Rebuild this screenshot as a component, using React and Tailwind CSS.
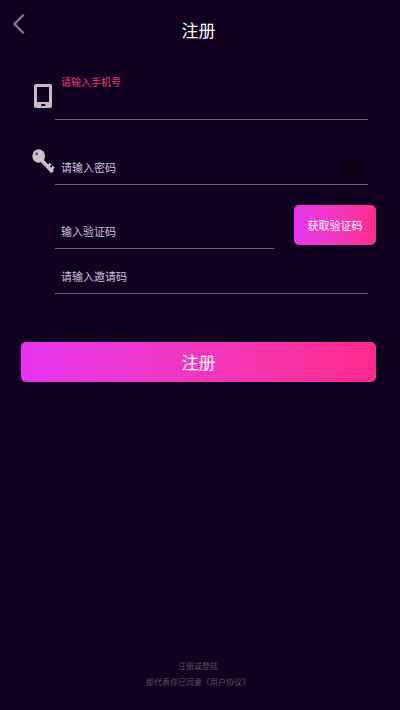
import { useState } from 'react';

const inputClass = 'block h-9 w-full min-w-0 border-b border-[#6f6578] bg-transparent px-[6px] text-[11px] text-[#d6cde4] placeholder:text-[#cbc2dc] placeholder:opacity-100 outline-none';

const PhoneIcon = () => (
  <svg className="h-[26px] w-[22px]" viewBox="0 0 22 26" fill="none" aria-hidden="true">
    <rect x="2" y="1" width="18" height="24" rx="2" fill="#c3bcc8" />
    <rect x="5" y="4" width="12" height="15" fill="#11001f" />
    <rect x="9" y="21" width="4.5" height="2" rx="1" fill="#11001f" />
  </svg>
);

const KeyIcon = () => (
  <svg className="h-[26px] w-[23px]" viewBox="0 0 23 26" fill="none" aria-hidden="true">
    <ellipse cx="6.7" cy="7" rx="6.4" ry="6.8" fill="#c9c3ce" />
    <circle cx="4.6" cy="4.8" r="1.4" fill="#4a4052" />
    <path d="M9 10.5L20.6 23" stroke="#c9c3ce" strokeWidth="3.6" />
    <path d="M15.5 18.5L18.6 14.6M18.4 22L21.6 17.6" stroke="#c9c3ce" strokeWidth="2.8" />
  </svg>
);

const EyeOffIcon = () => (
  <svg className="h-5 w-5" viewBox="0 0 20 20" fill="none" stroke="#07000f" strokeWidth="2" aria-hidden="true">
    <path d="M1.5 10C4 5.5 6.8 3.5 10 3.5S16 5.5 18.5 10C16 14.5 13.2 16.5 10 16.5S4 14.5 1.5 10Z" />
    <circle cx="10" cy="10" r="3" />
    <path d="M3 2L17 18" />
  </svg>
);

const App = () => {
  const [showPassword, setShowPassword] = useState(false);
  const [formData, setFormData] = useState({
    phone: '',
    password: '',
    code: '',
    invite: ''
  });

  const onChange = (e) => setFormData({ ...formData, [e.target.name]: e.target.value });

  const onSubmit = (e) => {
    e.preventDefault();
  };

  return (
    <div className="flex min-h-screen flex-col bg-[#11001f] font-['Noto_Sans_CJK_SC',sans-serif]">
      <header className="grid h-[60px] grid-cols-[1fr_auto_1fr] items-center pr-[3px]">
        <button type="button" aria-label="返回" className="mb-3 ml-3 w-4">
          <svg className="h-[22px] w-[14px]" viewBox="0 0 14 22" fill="none" stroke="#837b89" strokeWidth="2.2" aria-hidden="true">
            <path d="M11.8 1.5L2.5 11L11.8 20.5" />
          </svg>
        </button>
        <h1 className="text-[17px] leading-6 text-white">注册</h1>
      </header>

      <form onSubmit={onSubmit}>
        {/* Phone */}
        <div className="flex pt-[14px] pr-8 pl-8">
          <div className="w-[23px] shrink-0 pt-[9px]">
            <PhoneIcon />
          </div>
          <div className="min-w-0 flex-1">
            <label htmlFor="phone" className="block px-[6px] text-[10px] leading-4 text-[#ee3b84]">请输入手机号</label>
            <input id="phone" name="phone" type="tel" value={formData.phone} onChange={onChange} className="block h-[30px] w-full border-b border-[#6f6578] bg-transparent px-[6px] text-[11px] text-[#d6cde4] outline-none" />
          </div>
        </div>

        {/* Password */}
        <div className="mt-[29px] flex pr-8 pl-8">
          <div className="w-[23px] shrink-0">
            <KeyIcon />
          </div>
          <div className="relative min-w-0 flex-1">
            <input name="password" aria-label="请输入密码" placeholder="请输入密码" type={showPassword ? 'text' : 'password'} value={formData.password} onChange={onChange} className={inputClass} />
            <button type="button" aria-label="显示密码" onClick={() => setShowPassword(!showPassword)} className="absolute top-2 right-2">
              <EyeOffIcon />
            </button>
          </div>
        </div>

        {/* Verification code */}
        <div className="mt-5 flex gap-5 pr-6 pl-[55px]">
          <div className="min-w-0 flex-1 pt-2">
            <input name="code" aria-label="输入验证码" placeholder="输入验证码" type="text" value={formData.code} onChange={onChange} className={inputClass} />
          </div>
          <button type="button" className="h-10 w-[82px] shrink-0 rounded-[5px] bg-linear-to-r from-[#e535ee] to-[#ff298c] text-[11px] text-white">
            获取验证码
          </button>
        </div>

        {/* Invite code */}
        <div className="mt-[9px] pr-8 pl-[55px]">
          <input name="invite" aria-label="请输入邀请码" placeholder="请输入邀请码" type="text" value={formData.invite} onChange={onChange} className={inputClass} />
        </div>

        <div className="mt-12 pr-6 pl-[21px]">
          <button type="submit" className="h-10 w-full rounded-[5px] bg-linear-to-r from-[#e535ee] to-[#ff298c] text-[17px] text-white">
            注册
          </button>
        </div>
      </form>

      <footer className="mt-auto pr-1 pb-5 text-center text-[8px] leading-4 text-[#5b535f]">
        <p>注册或登陆</p>
        <p>即代表你已同意<a href="#agreement">《用户协议》</a></p>
      </footer>
    </div>
  );
};

export default App;
